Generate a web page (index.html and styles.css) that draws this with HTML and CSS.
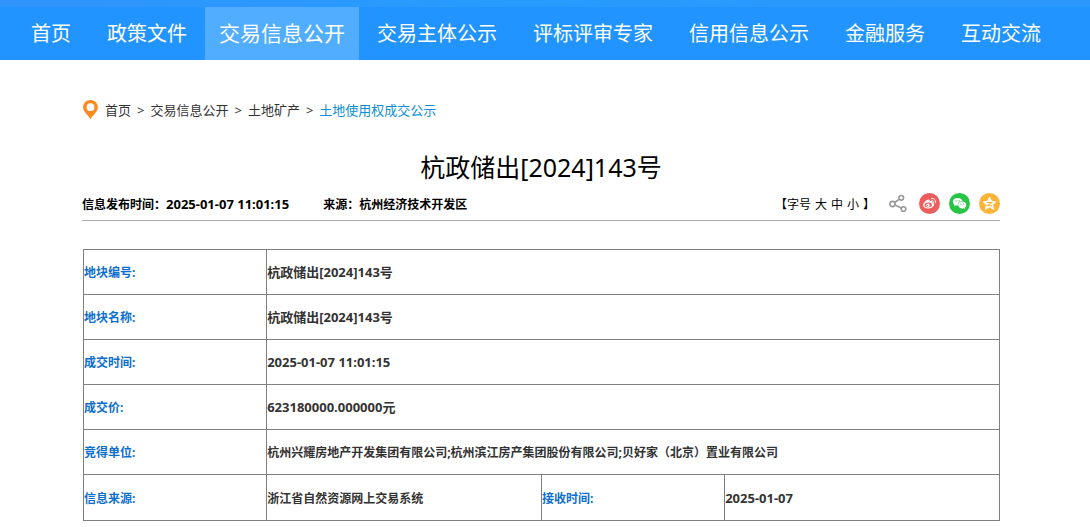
FILE: index.html
```html
<!DOCTYPE html>
<html lang="zh-CN">
<head>
<meta charset="utf-8">
<title>杭政储出[2024]143号</title>
<link rel="stylesheet" href="styles.css">
</head>
<body>
<header class="header">
  <div class="banner"></div>
  <nav class="nav">
    <a class="nav-item" href="#">首页</a>
    <a class="nav-item" href="#">政策文件</a>
    <a class="nav-item active" href="#">交易信息公开</a>
    <a class="nav-item" href="#">交易主体公示</a>
    <a class="nav-item" href="#">评标评审专家</a>
    <a class="nav-item" href="#">信用信息公示</a>
    <a class="nav-item" href="#">金融服务</a>
    <a class="nav-item" href="#">互动交流</a>
  </nav>
</header>
<main class="page">
  <nav class="crumbs">
    <svg class="pin" viewBox="0 0 16 20"><path fill="#ff8a1c" fill-rule="evenodd" d="M8 0C3.900 0 .6 3.200.6 7.300c0 4.500 4.900 7.500 7.400 11.900C10.500 14.800 15.400 11.800 15.400 7.300 15.400 3.200 12.100 0 8 0zm0 3.300a3.900 3.900 0 1 1 0 7.800A3.900 3.900 0 0 1 8 3.300z"/></svg>
    <a href="#">首页</a><span>&gt;</span>
    <a href="#">交易信息公开</a><span>&gt;</span>
    <a href="#">土地矿产</a><span>&gt;</span>
    <a class="current" href="#">土地使用权成交公示</a>
  </nav>
  <h1 class="title">杭政储出[2024]143号</h1>
  <div class="meta">
    <div class="facts">
      <span class="fact">信息发布时间：<span class="num">2025-01-07 11:01:15</span></span>
      <span class="fact">来源：杭州经济技术开发区</span>
    </div>
    <div class="tools">
      <div class="sizes"><span>【字号</span><button type="button">大</button><button type="button">中</button><button type="button">小</button><span>】</span></div>
      <a class="share" href="#" aria-label="分享"><svg viewBox="0 0 21 21" fill="none" stroke="#999" stroke-width="1.600"><circle cx="3.500" cy="11" r="2.600"/><circle cx="12.300" cy="4.800" r="2.300"/><circle cx="14.500" cy="16" r="2.300"/><path d="M5.700 9.500l4.700-3.300M6 12.100l6.300 2.900"/></svg></a>
      <a class="share" href="#" aria-label="微博"><svg viewBox="0 0 21 21"><circle cx="10.500" cy="10.500" r="10.500" fill="#ec5d5d"/><path fill="#fff" d="M9.800 6.400c1 .2 1 1.100.8 1.900 1.500-.5 3-.4 2.700 1.300 1.300.4 2 1.200 1.700 2.300-.5 2-3.100 3.500-6 3.500-2.700 0-4.900-1.300-4.900-3.200 0-2.300 3.700-6.100 5.700-5.800z"/><ellipse cx="9.200" cy="12" rx="3.700" ry="2.400" fill="#ec5d5d" transform="rotate(-7 9 12)"/><circle cx="8.900" cy="12.300" r="1.700" fill="#fff"/><circle cx="8.500" cy="12.600" r=".6" fill="#ec5d5d"/><path d="M12.800 7.600c1.200-.2 1.900.6 1.600 1.800M12.600 5.500c2.700-.5 4.500 1.700 3.700 4.300" fill="none" stroke="#fff" stroke-linecap="round"/></svg></a>
      <a class="share" href="#" aria-label="微信"><svg viewBox="0 0 21 21"><circle cx="10.500" cy="10.500" r="10.500" fill="#28c445"/><path fill="#fff" d="M8.600 5C5.800 5 3.800 6.700 3.800 8.800c0 1.200.7 2.200 1.700 2.900L5.100 13.200l1.800-.9c.6.1 1.200.2 1.900.2 0-2.800 1.900-4.500 4.700-4.500C12.900 6.200 11 5 8.600 5z"/><path fill="#fff" d="M13.300 8.500c-2.400 0-4.100 1.500-4.100 3.400s1.700 3.500 4.100 3.500c.5 0 1-.1 1.400-.2l1.500.8-.4-1.400c.9-.6 1.500-1.600 1.500-2.700 0-1.900-1.700-3.400-4-3.400z"/><g fill="#28c445"><circle cx="7.100" cy="7.800" r=".65"/><circle cx="10.200" cy="7.800" r=".65"/><circle cx="12" cy="11.100" r=".55"/><circle cx="14.700" cy="11.100" r=".55"/></g></svg></a>
      <a class="share" href="#" aria-label="QQ空间"><svg viewBox="0 0 21 21"><circle cx="10.500" cy="10.500" r="10.500" fill="#fcb436"/><path fill="#fff" stroke="#fff" stroke-linejoin="round" d="M10.500 4.200l1.900 4.100 4.400.5-3.200 3 .9 4.500-4-2.200-4 2.200.9-4.500-3.200-3 4.400-.5z"/><path d="M7.900 9.500h4.800l-4.300 3.300h4.800" fill="none" stroke="#fcb436" stroke-width="1.100"/></svg></a>
    </div>
  </div>
  <table class="details">
    <colgroup><col class="key"><col class="val"><col class="key"><col class="val"></colgroup>
    <tr><th scope="row">地块编号:</th><td class="num" colspan="3">杭政储出[2024]143号</td></tr>
    <tr><th scope="row">地块名称:</th><td class="num" colspan="3">杭政储出[2024]143号</td></tr>
    <tr><th scope="row">成交时间:</th><td class="num" colspan="3">2025-01-07 11:01:15</td></tr>
    <tr><th scope="row">成交价:</th><td class="num" colspan="3">623180000.000000元</td></tr>
    <tr><th scope="row">竞得单位:</th><td colspan="3">杭州兴耀房地产开发集团有限公司;杭州滨江房产集团股份有限公司;贝好家（北京）置业有限公司</td></tr>
    <tr><th scope="row">信息来源:</th><td>浙江省自然资源网上交易系统</td><th scope="row">接收时间:</th><td class="num">2025-01-07</td></tr>
  </table>
</main>
</body>
</html>
```
FILE: styles.css
```css
* { box-sizing: border-box; }
body {
  margin: 0;
  background: #fff;
  color: #333;
  font-family: "Noto Sans", "Noto Sans CJK SC", sans-serif;
  font-size: 12px;
}
a { color: inherit; text-decoration: none; }
.banner { height: 7px; background: linear-gradient(90deg, #3094fc, #279bff 45%, #2b97ff); }
.nav {
  display: flex;
  height: 53px;
  padding-left: 13px;
  background: #2294ff;
  color: #fff;
}
.nav-item {
  padding: 0 18px;
  font-size: 20px;
  line-height: 53px;
  white-space: nowrap;
}
.nav-item.active { padding: 0 14px; background: #51adff; font-size: 21px; }
.page { padding: 39px 90px 6px 82px; }
.crumbs {
  display: flex;
  align-items: center;
  gap: 6px;
  height: 22px;
  font-size: 13px;
  line-height: 22px;
}
.pin { width: 17px; height: 20px; }
.current { color: #0c8fd8; }
.title {
  margin: 26px 0 0;
  color: #000;
  font-size: 25px;
  font-weight: 400;
  line-height: 40px;
  text-align: center;
}
.meta {
  display: flex;
  justify-content: space-between;
  align-items: center;
  height: 34px;
  border-bottom: 1px solid #aaa;
  color: #000;
}
.facts { display: flex; align-items: baseline; gap: 34px; padding-top: 2px; font-weight: 700; }
.fact { line-height: 20px; }
.num, .details .num { font-size: 13px; }
.tools { display: flex; align-items: center; gap: 9px; }
.sizes { display: flex; gap: 4px; margin-right: 5px; padding-top: 2px; line-height: 20px; }
.sizes button {
  padding: 0;
  border: 0;
  background: none;
  color: inherit;
  font: inherit;
  line-height: 20px;
  cursor: pointer;
}
.share, .share svg { display: block; width: 21px; height: 21px; }
.details {
  width: calc(100% - 1px);
  margin: 28px 0 0 1px;
  border-collapse: collapse;
  table-layout: fixed;
}
.key { width: 20%; }
.val { width: 30%; }
.details th, .details td {
  height: 45px;
  padding: 2px 0 0;
  border: 1px solid #808080;
  font-size: 12px;
  font-weight: 700;
  line-height: 20px;
  text-align: left;
}
.details tr:last-child > * { height: 46px; }
.details .num { padding-top: 0; }
.details th { color: #0c6fd0; }
```
